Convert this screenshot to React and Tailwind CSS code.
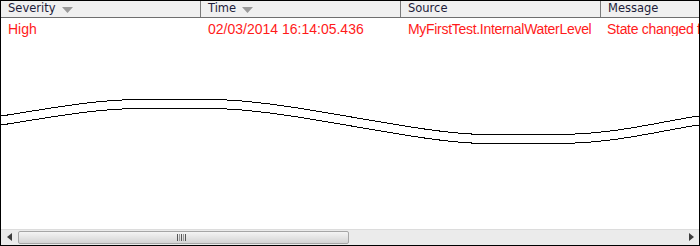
import React from "react";

const cols = [
  { label: "Severity", sort: true },
  { label: "Time", sort: true },
  { label: "Source", sort: false },
  { label: "Message", sort: false },
];

function SortArrow() {
  return (
    <svg width="11" height="6" viewBox="0 0 11 6" className="ml-[6px] mt-[1px]">
      <polygon points="0,0 11,0 5.5,6" fill="#9a9a9a" />
    </svg>
  );
}

const wave1 = "M-2,115.5 C50,107.5 95,98.5 140,98.5 L210,98.5 C290,98.5 415,133.5 487,133.5 L557,133.5 C615,133.5 660,120.5 702,114.5";
const wave2 = "M-2,124.5 C50,116.5 95,107.5 140,107.5 L210,107.5 C290,107.5 415,142.5 487,142.5 L557,142.5 C615,142.5 660,129.5 702,123.5";

export default function App() {
  return (
    <div className="relative w-[700px] h-[246px] border border-black bg-white flex flex-col overflow-hidden" style={{ fontFamily: '"Liberation Sans", Arial, sans-serif' }}>
      <div className="flex h-[17px] bg-[#f0f0f0] border-b border-[#6e6e6e] shrink-0">
        {cols.map((c, i) => (
          <div key={i} className="w-[200px] shrink-0 flex items-center pl-[7px] border-r border-[#7a7a7a] text-[12px] leading-none text-[#1c1c3a]" style={{ fontFamily: '"DejaVu Sans", Tahoma, sans-serif', fontSize: "11.5px" }}>
            <span>{c.label}</span>
            {c.sort && <SortArrow />}
          </div>
        ))}
      </div>
      <div className="flex-1 relative">
        <div className="flex h-[21px] items-center text-[14px] text-[#ff1a1a] leading-none">
          <div className="w-[200px] shrink-0 pl-[7px]">High</div>
          <div className="w-[200px] shrink-0 pl-[7px]">02/03/2014 16:14:05.436</div>
          <div className="w-[200px] shrink-0 pl-[7px] tracking-[-0.3px] whitespace-nowrap">MyFirstTest.InternalWaterLevel</div>
          <div className="w-[200px] shrink-0 pl-[6px] tracking-[-0.3px] whitespace-nowrap overflow-hidden">State changed from</div>
        </div>
      </div>
      <div className="h-[16px] shrink-0 bg-[#ebebeb] border-t border-[#dcdcdc] flex items-center relative">
        <svg width="5" height="8" viewBox="0 0 5 8" className="absolute left-[6px] top-[3px]">
          <polygon points="5,0 5,8 0,4" fill="#3c3c3c" />
        </svg>
        <div className="absolute left-[17px] top-[1px] w-[331px] h-[13px] rounded-[2px] border border-[#a6a6a6] bg-gradient-to-b from-[#f4f4f4] to-[#d4d4d4] flex items-center justify-center">
          <div className="flex gap-[1px] ml-[-4px]">
            <div className="w-[1px] h-[7px] bg-[#555]" />
            <div className="w-[1px] h-[7px] bg-[#999]" />
            <div className="w-[1px] h-[7px] bg-[#555]" />
            <div className="w-[1px] h-[7px] bg-[#999]" />
            <div className="w-[1px] h-[7px] bg-[#555]" />
          </div>
        </div>
        <svg width="5" height="8" viewBox="0 0 5 8" className="absolute right-[5px] top-[3px]">
          <polygon points="0,0 0,8 5,4" fill="#3c3c3c" />
        </svg>
      </div>
      <svg width="700" height="246" viewBox="0 0 700 246" className="absolute left-[-1px] top-[-1px] pointer-events-none">
        <g transform="translate(0,1)">
          <path d={wave1 + " L702,123.5 C660,129.5 615,142.5 557,142.5 L487,142.5 C415,142.5 290,107.5 210,107.5 L140,107.5 C95,107.5 50,116.5 -2,124.5 Z"} fill="white" />
          <path d={wave1} fill="none" stroke="black" strokeWidth="1" shapeRendering="crispEdges" />
          <path d={wave2} fill="none" stroke="black" strokeWidth="1" shapeRendering="crispEdges" />
        </g>
      </svg>
    </div>
  );
}
